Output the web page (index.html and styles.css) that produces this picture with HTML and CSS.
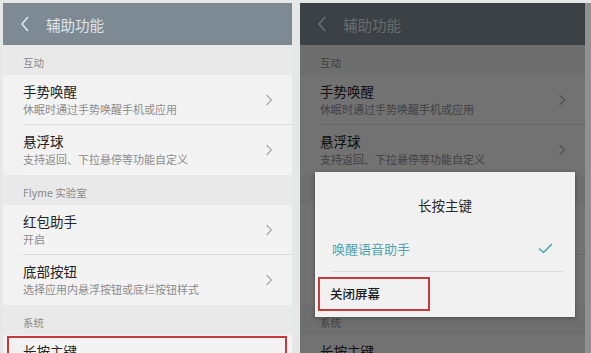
FILE: index.html
```html
<!DOCTYPE html>
<html lang="zh-CN">
<head>
    <meta charset="UTF-8">
    <meta name="viewport" content="width=device-width, initial-scale=1.0">
    <title>辅助功能</title>
    <link rel="stylesheet" href="styles.css">
</head>
<body>
    <div class="screens">

        <div class="phone">
            <div class="topbar">
                <svg class="back" width="10" height="16" viewBox="0 0 10 16"><polyline points="8,1 2,8 8,15" fill="none" stroke="#e2e6e8" stroke-width="1.6"/></svg>
                <span class="topbar-title">辅助功能</span>
            </div>

            <div class="section">互动</div>
            <div class="item">
                <div class="item-text">
                    <div class="item-title">手势唤醒</div>
                    <div class="item-sub">休眠时通过手势唤醒手机或应用</div>
                </div>
                <svg class="arrow" width="8" height="12" viewBox="0 0 8 12"><polyline points="1.5,1 6.5,6 1.5,11" fill="none" stroke="#ababab" stroke-width="1.3"/></svg>
            </div>
            <div class="item last">
                <div class="item-text">
                    <div class="item-title">悬浮球</div>
                    <div class="item-sub">支持返回、下拉悬停等功能自定义</div>
                </div>
                <svg class="arrow" width="8" height="12" viewBox="0 0 8 12"><polyline points="1.5,1 6.5,6 1.5,11" fill="none" stroke="#ababab" stroke-width="1.3"/></svg>
            </div>

            <div class="section">Flyme 实验室</div>
            <div class="item">
                <div class="item-text">
                    <div class="item-title">红包助手</div>
                    <div class="item-sub">开启</div>
                </div>
                <svg class="arrow" width="8" height="12" viewBox="0 0 8 12"><polyline points="1.5,1 6.5,6 1.5,11" fill="none" stroke="#ababab" stroke-width="1.3"/></svg>
            </div>
            <div class="item last">
                <div class="item-text">
                    <div class="item-title">底部按钮</div>
                    <div class="item-sub">选择应用内悬浮按钮或底栏按钮样式</div>
                </div>
                <svg class="arrow" width="8" height="12" viewBox="0 0 8 12"><polyline points="1.5,1 6.5,6 1.5,11" fill="none" stroke="#ababab" stroke-width="1.3"/></svg>
            </div>

            <div class="section">系统</div>
            <div class="item last marked">
                <div class="item-text">
                    <div class="item-title">长按主键</div>
                    <div class="item-sub">唤醒语音助手</div>
                </div>
                <svg class="arrow" width="8" height="12" viewBox="0 0 8 12"><polyline points="1.5,1 6.5,6 1.5,11" fill="none" stroke="#ababab" stroke-width="1.3"/></svg>
            </div>
        </div>

        <div class="phone right">
            <div class="topbar">
                <svg class="back" width="10" height="16" viewBox="0 0 10 16"><polyline points="8,1 2,8 8,15" fill="none" stroke="#e2e6e8" stroke-width="1.6"/></svg>
                <span class="topbar-title">辅助功能</span>
            </div>

            <div class="section">互动</div>
            <div class="item">
                <div class="item-text">
                    <div class="item-title">手势唤醒</div>
                    <div class="item-sub">休眠时通过手势唤醒手机或应用</div>
                </div>
                <svg class="arrow" width="8" height="12" viewBox="0 0 8 12"><polyline points="1.5,1 6.5,6 1.5,11" fill="none" stroke="#ababab" stroke-width="1.3"/></svg>
            </div>
            <div class="item last">
                <div class="item-text">
                    <div class="item-title">悬浮球</div>
                    <div class="item-sub">支持返回、下拉悬停等功能自定义</div>
                </div>
                <svg class="arrow" width="8" height="12" viewBox="0 0 8 12"><polyline points="1.5,1 6.5,6 1.5,11" fill="none" stroke="#ababab" stroke-width="1.3"/></svg>
            </div>

            <!-- covered by the dialog -->
            <div class="covered">
                <div class="section">Flyme 实验室</div>
                <div class="item">
                    <div class="item-text">
                        <div class="item-title">红包助手</div>
                        <div class="item-sub">开启</div>
                    </div>
                </div>
                <div class="item last">
                    <div class="item-text">
                        <div class="item-title">底部按钮</div>
                        <div class="item-sub">选择应用内悬浮按钮或底栏按钮样式</div>
                    </div>
                </div>
            </div>

            <div class="section">系统</div>
            <div class="item last">
                <div class="item-text">
                    <div class="item-title">长按主键</div>
                    <div class="item-sub">唤醒语音助手</div>
                </div>
                <svg class="arrow" width="8" height="12" viewBox="0 0 8 12"><polyline points="1.5,1 6.5,6 1.5,11" fill="none" stroke="#ababab" stroke-width="1.3"/></svg>
            </div>

            <div class="dim"></div>

            <div class="dialog">
                <div class="dialog-title">长按主键</div>
                <div class="option selected">
                    <span>唤醒语音助手</span>
                    <svg width="15" height="11" viewBox="0 0 15 11"><polyline points="1,5.5 5.5,9.5 14,1" fill="none" stroke="#4ea6b3" stroke-width="1.6"/></svg>
                </div>
                <div class="option">
                    <span class="option-mark">关闭屏幕</span>
                </div>
            </div>
        </div>

    </div>
</body>
</html>
```

FILE: styles.css
```css
body {
    margin: 0;
    height: 353px;
    overflow: hidden;
    background-color: #e6e7e7;
    font-family: "Noto Sans CJK SC", "Noto Sans", sans-serif;
}

.screens {
    display: flex;
    gap: 8px;
    padding: 3px 0 0 3px;
}

.phone {
    position: relative;
    width: 289px;
    height: 350px;
    overflow: hidden;
    background-color: #f2f2f2;
}

.phone.right {
    width: 285px;
    border-right: 6px solid #8e9091;
}

.topbar {
    height: 42px;
    display: flex;
    align-items: center;
    gap: 16px;
    padding-left: 17px;
    background-color: #7d8a93;
}

.topbar-title {
    font-size: 14.5px;
    color: #dfe4e6;
}

.section {
    height: 30px;
    box-sizing: border-box;
    padding: 11px 0 0 20px;
    font-size: 10.5px;
    line-height: 14px;
    color: #8a8a8a;
    background-color: #e9e9e9;
}

.item {
    height: 50px;
    box-sizing: border-box;
    display: flex;
    align-items: center;
    justify-content: space-between;
    margin-left: 20px;
    padding-right: 19px;
    border-bottom: 1px solid #dcdcdc;
    background-color: #f3f3f3;
}

.item.last {
    border-bottom: none;
}

.item-text {
    padding-bottom: 2px;
}

.item-title {
    font-size: 13.5px;
    line-height: 20px;
    color: #242424;
}

.item-sub {
    font-size: 11px;
    line-height: 16px;
    color: #8c8c8c;
}

.covered .item-text,
.covered .section {
    color: transparent;
}

.covered .item-text div {
    visibility: hidden;
}

.item.marked {
    position: relative;
    overflow: visible;
}

.item.marked::after {
    content: '';
    position: absolute;
    top: 1px;
    left: -16px;
    right: 5px;
    height: 40px;
    border: 2px solid #c63a3c;
}

.dim {
    position: absolute;
    inset: 0;
    background-color: rgba(0, 0, 0, 0.53);
}

.dialog {
    position: absolute;
    top: 169px;
    left: 15px;
    width: 260px;
    height: 145px;
    background-color: #f1f1f1;
    box-shadow: 0 1px 4px rgba(0, 0, 0, 0.35);
}

.dialog-title {
    padding-top: 23px;
    height: 54px;
    box-sizing: border-box;
    text-align: center;
    font-size: 13.5px;
    line-height: 20px;
    color: #2a2a2a;
}

.option {
    display: flex;
    align-items: center;
    justify-content: space-between;
    font-size: 13px;
}

.option.selected {
    height: 45px;
    margin: 0 12px 0 17px;
    padding-right: 10px;
    border-bottom: 1px solid #dadada;
    color: #4ea6b3;
}

.option-mark {
    width: 112px;
    height: 34px;
    box-sizing: border-box;
    margin: 5px 0 0 3px;
    padding-left: 10px;
    border: 2px solid #c63a3c;
    line-height: 30px;
    font-size: 12.5px;
    font-weight: 500;
    color: #1e1e1e;
}
```
